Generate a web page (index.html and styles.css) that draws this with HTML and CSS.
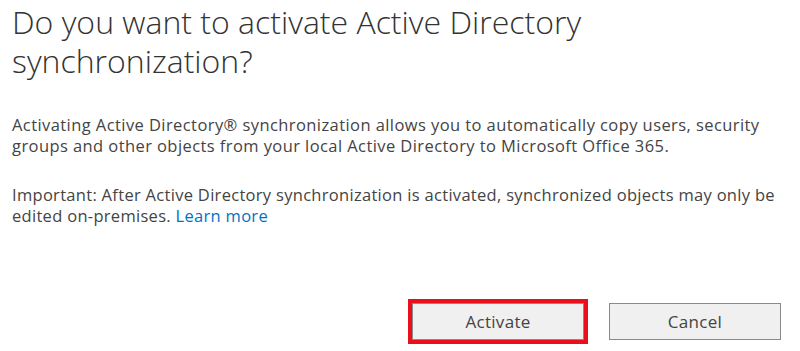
FILE: index.html
```html
<!DOCTYPE html>
<html lang="en">
<head>
<meta charset="utf-8">
<title>Activate Active Directory synchronization</title>
<link rel="stylesheet" href="styles.css">
</head>
<body>
<div class="dialog">
  <h1 class="title">Do you want to activate Active Directory synchronization?</h1>
  <p class="text">Activating Active Directory® synchronization allows you to automatically copy users, security groups and other objects from your local Active Directory to Microsoft Office 365.</p>
  <p class="text text-second">Important: After Active Directory synchronization is activated, synchronized objects may only be edited on-premises. <a class="link" href="#">Learn more</a></p>
  <div class="actions">
    <button class="btn btn-primary" type="button">Activate</button>
    <button class="btn" type="button">Cancel</button>
  </div>
</div>
</body>
</html>
```
FILE: styles.css
```css
html, body {
  margin: 0;
  padding: 0;
  background: #ffffff;
}
.dialog {
  width: 800px;
  height: 351px;
  box-sizing: border-box;
  display: flex;
  flex-direction: column;
  padding: 2px 19px 11px 12px;
  font-family: "Open Sans", "Noto Sans", sans-serif;
}
.title {
  margin: 0;
  width: 620px;
  font-size: 32px;
  font-weight: 300;
  line-height: 39px;
  color: #333333;
}
.text {
  margin: 34px 0 0 0;
  font-size: 16.5px;
  line-height: 21px;
  letter-spacing: 0.42px;
  color: #444444;
  width: 782px;
}
.text-second {
  margin-top: 28px;
  letter-spacing: 0.3px;
}
.link {
  color: #0072c6;
  text-decoration: none;
}
.actions {
  margin-top: auto;
  display: flex;
  justify-content: flex-end;
  gap: 25px;
}
.btn {
  width: 172px;
  height: 37px;
  box-sizing: border-box;
  background: #f0f0f0;
  border: 1px solid #8a8a8a;
  color: #444444;
  font-family: "Open Sans", "Noto Sans", sans-serif;
  font-size: 17px;
  letter-spacing: 0.3px;
  padding: 0;
}
.btn-primary {
  outline: 4px solid #e8101b;
  outline-offset: 0;
}
```
